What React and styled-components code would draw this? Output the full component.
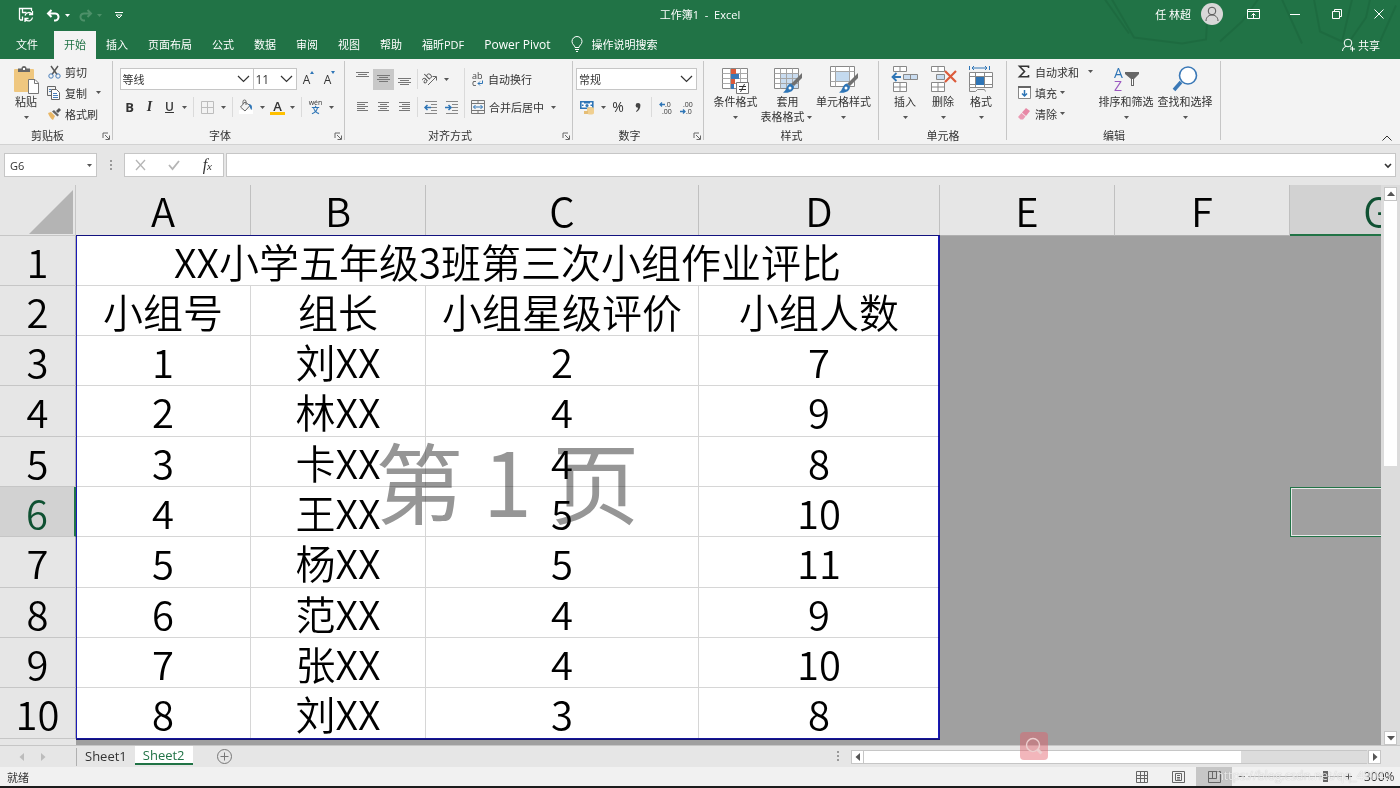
import React from 'react';
import styled, { createGlobalStyle, css } from 'styled-components';

const GlobalStyle = createGlobalStyle`
  :root {
    --green: #217346;
    --ribbon: #f3f3f3;
    --chrome: #e6e6e6;
    --line: #c6c6c6;
    --ink: #333333;
    --blue: #2e75b6;
  }

  * {
    box-sizing: border-box;
  }

  body {
    margin: 0;
    font-family: 'Open Sans', 'Noto Sans CJK SC', sans-serif;
    font-size: 11px;
    color: var(--ink);
  }

  button,
  input,
  select {
    font: inherit;
    color: inherit;
    margin: 0;
    padding: 0;
    border: 0;
    background: none;
    border-radius: 0;
  }

  svg {
    display: block;
    flex: none;
    overflow: visible;
  }
`;

const GROUPS = [
  ['1', '刘XX', '2', '7'],
  ['2', '林XX', '4', '9'],
  ['3', '卡XX', '4', '8'],
  ['4', '王XX', '5', '10'],
  ['5', '杨XX', '5', '11'],
  ['6', '范XX', '4', '9'],
  ['7', '张XX', '4', '10'],
  ['8', '刘XX', '3', '8'],
];

const COLUMNS = ['A', 'B', 'C', 'D', 'E', 'F', 'G'];
const COLUMN_WIDTHS = [76, 175, 175, 273, 241, 175, 175, 175];
const TABS = ['插入', '页面布局', '公式', '数据', '审阅', '视图', '帮助', '福昕PDF'];

/* ---------- icons ---------- */

const Icon = ({ w = 16, h = 16, children, ...rest }) => (
  <svg
    width={w}
    height={h}
    viewBox={`0 0 ${w} ${h}`}
    fill="none"
    stroke="currentColor"
    aria-hidden="true"
    {...rest}
  >
    {children}
  </svg>
);

const Caret = () => (
  <CaretBox>
    <Icon w={5} h={3} stroke="none">
      <path d="M0 0h5L2.500 3z" fill="currentColor" />
    </Icon>
  </CaretBox>
);

const Chevron = () => (
  <Icon w={13} h={8} strokeWidth="1.2">
    <path d="M1 1l5.500 5.500L12 1" />
  </Icon>
);

const Launcher = () => (
  <Icon w={8} h={8} stroke="#666">
    <path d="M1 6V1h5M3 3l4 4M7.500 3.500v4h-4" />
  </Icon>
);

const SaveIcon = () => (
  <Icon w={16} h={16} strokeWidth="1.3">
    <path d="M5 13H2.500L1.500 12V1.500h12V4M4.500 1.500v4h4M4.500 13V9.500" />
    <path d="M7 8.500a4 4 0 0 1 7-1.500M14.500 4v3.500H11M14.500 10.500a4 4 0 0 1-7 2M7 15v-3.500h3.500" />
  </Icon>
);

const UndoIcon = () => (
  <Icon w={15} h={13} strokeWidth="2">
    <path d="M5.500 1L2 4.500 5.500 8M2 4.500h6.500a3.500 3.500 0 0 1 1 7H8" />
  </Icon>
);

const RedoIcon = () => (
  <Icon w={15} h={13} strokeWidth="2">
    <path d="M9.500 1L13 4.500 9.500 8M13 4.500H6.500a3.500 3.500 0 0 0-1 7H7" />
  </Icon>
);

const CustomizeIcon = () => (
  <Icon w={8} h={7}>
    <path d="M0 .5h8M1 3h6L4 6z" />
  </Icon>
);

const AvatarIcon = () => (
  <Icon w={22} h={22}>
    <circle cx="11" cy="11" r="11" fill="#d8d8d8" stroke="none" />
    <circle cx="11" cy="8" r="3.800" stroke="#555" />
    <path d="M5 18c0-8 12-8 12 0" stroke="#555" />
  </Icon>
);

const RibbonModeIcon = () => (
  <Icon w={13} h={11}>
    <path d="M.5.5h12v9H.5zM.5 2.500h12M6.500 9V4.500M4.500 6.500l2-2 2 2" />
  </Icon>
);

const MinimizeIcon = () => (
  <Icon w={10} h={10}>
    <path d="M0 5.500h10" />
  </Icon>
);

const RestoreIcon = () => (
  <Icon w={10} h={10}>
    <path d="M.5 2.500h7v7h-7zM2.500 2.500v-2h7v7h-2" />
  </Icon>
);

const CloseIcon = () => (
  <Icon w={10} h={10}>
    <path d="M.5.5l9 9M9.500.5l-9 9" />
  </Icon>
);

const BulbIcon = () => (
  <Icon w={12} h={16}>
    <path d="M4 11.500c0-2-3-3-3-6a5 5 0 0 1 10 0c0 3-3 4-3 6zM4 13.500h4M5 15.500h2" />
  </Icon>
);

const ShareIcon = () => (
  <Icon w={14} h={14}>
    <circle cx="6" cy="5" r="3.800" />
    <path d="M.5 13c.3-3 2-4.500 4-4.500M8 8.500l1.500 1M10.500 8.500v5M8 11h5" />
  </Icon>
);

const PasteIcon = () => (
  <Icon w={28} h={28} stroke="none">
    <rect x="2" y="3" width="20" height="23" rx="1" fill="#efc77f" />
    <path d="M6 6V2.500h3.500a2.500 2.500 0 0 1 5 0H18V6z" fill="#666" />
    <rect x="11" y="2" width="2" height="2" fill="#fff" />
    <path d="M16.500 13.500h6.500l3.500 3.500v10.500h-10z" fill="#fff" stroke="#777" />
    <path d="M22.500 13.500V17.500h4" stroke="#777" />
  </Icon>
);

const CutIcon = () => (
  <Icon w={13} h={14}>
    <path d="M3 1l6 8.500M10 1L4 9.500" stroke="#555" strokeWidth="1.400" />
    <circle cx="3" cy="11" r="2.200" stroke="#4a7fbb" />
    <circle cx="10" cy="11" r="2.200" stroke="#4a7fbb" />
  </Icon>
);

const CopyIcon = () => (
  <Icon w={14} h={14} stroke="#666">
    <path d="M8.500 3.500V.5h-8v9h4" />
    <path d="M4.500 3.500h5l3 3v7h-8z" fill="#fff" />
    <path d="M2 3.500h2M2 5.500h2M6 7.500h4M6 9.500h5M6 11.500h5" stroke="#4a7fbb" />
  </Icon>
);

const BrushIcon = () => (
  <Icon w={13} h={12} stroke="none">
    <path d="M0 5l3-1 4 4-2 4C3 11 1 8 0 5z" fill="#e9b766" />
    <path d="M4 3.500L6 2l5 5-1.500 1.500z" fill="#666" />
    <path d="M8 3l3-3 2 2-3 3z" fill="#555" />
  </Icon>
);

const BordersIcon = () => (
  <Icon w={13} h={13} stroke="#bdbdbd">
    <path d="M.5.5h12v12H.5zM6.500.5v12M.5 6.500h12" />
  </Icon>
);

const FillIcon = () => (
  <Icon w={15} h={14}>
    <rect x="0" y="10" width="14" height="4" fill="#fff" stroke="none" />
    <path d="M6 2L1.500 7l4.500 4 5-5.500zM4 4V1.500a1.500 1.500 0 0 1 3 0V5" stroke="#666" />
    <path d="M10 4c3 .5 3.500 3 2.500 6-1-1-2-3-2.500-6z" fill="#2e75b6" stroke="none" />
  </Icon>
);

const FontStepMark = ({ down }) => (
  <Icon w={5} h={3} stroke="none">
    <path d={down ? 'M0 0h4L2 3z' : 'M0 3h4L2 0z'} fill="#2e75b6" />
  </Icon>
);

const AlignIcon = ({ lines, top = 0 }) => (
  <Icon w={13} h={16} stroke="#777">
    {lines.map(([x, length], i) => (
      <path key={i} d={`M${x} ${top + i * 2 + 0.5}h${length}`} />
    ))}
  </Icon>
);

const OrientationIcon = () => (
  <Icon w={14} h={14}>
    <path d="M4 13l8-8M12.500 8.500V4.500h-4" stroke="#666" />
    <text
      x="-1"
      y="8"
      transform="rotate(-45 5 8)"
      fontSize="10"
      fill="#444"
      stroke="none"
    >
      ab
    </text>
  </Icon>
);

const IndentIcon = ({ right }) => (
  <Icon w={14} h={13} stroke="#888">
    <path d="M1 .5h12M7 3.500h6M7 6.500h6M7 9.500h6M1 12.500h12" />
    {right ? (
      <path d="M0 6.500h6M3.500 4l2.500 2.500L3.500 9" stroke="#2e75b6" strokeWidth="1.500" />
    ) : (
      <path d="M7 6.500H1M3.500 4L1 6.500 3.500 9" stroke="#2e75b6" strokeWidth="1.500" />
    )}
  </Icon>
);

const WrapIcon = () => (
  <Icon w={13} h={14} stroke="none">
    <text x="1" y="7" fontSize="9" fill="#444">
      ab
    </text>
    <text x="1" y="14" fontSize="9" fill="#444">
      c
    </text>
    <path d="M11.500 8.500v3H7M9 9.500l-2 2 2 2" stroke="#2e75b6" />
  </Icon>
);

const MergeIcon = () => (
  <Icon w={14} h={14} stroke="#777">
    <path d="M.5.5h13v13H.5zM.5 3.500h13M.5 10.500h13M7 .5v3M7 10.500v3" />
    <path d="M2.500 7h9M4.500 5l-2 2 2 2M9.500 5l2 2-2 2" stroke="#2e75b6" />
  </Icon>
);

const CurrencyIcon = () => (
  <Icon w={15} h={15} stroke="none">
    <path d="M.8 1.800h12v6.500H.8z" fill="#fff" stroke="#2e75b6" strokeWidth="1.600" />
    <path d="M4 2h6v1.500H4zM2 4.500h1.500v1.500H2zM10.500 4.500H12v1.500h-1.500z" fill="#2e75b6" />
    <circle cx="7" cy="5.500" r="1.600" fill="#2e75b6" />
    <ellipse cx="10.500" cy="8.500" rx="3.500" ry="1.500" fill="#f0cf90" />
    <path d="M7 9h7v4c0 2-7 2-7 0z" fill="#f0cf90" />
    <path d="M4 11h4v3H4z" fill="#e5bd75" />
  </Icon>
);

const DecimalIcon = ({ decrease }) => (
  <Icon w={13} h={13} stroke="none">
    <text x={decrease ? 3 : 6} y="6" fontSize="7" fill="#333">
      {decrease ? '.00' : '.0'}
    </text>
    <text x={decrease ? 6 : 3} y="13" fontSize="7" fill="#333">
      {decrease ? '.0' : '.00'}
    </text>
    {decrease ? (
      <path d="M0 10.500h5M3 8.500l2 2-2 2" stroke="#2e75b6" strokeWidth="1.300" />
    ) : (
      <path d="M6 3.500H1M3 1.500l-2 2 2 2" stroke="#2e75b6" strokeWidth="1.300" />
    )}
  </Icon>
);

const ConditionalIcon = () => (
  <Icon w={28} h={28}>
    <path d="M.5 2.500h25v20H.5z" fill="#fff" stroke="#888" />
    <path d="M8.500 2.500v20M18.500 2.500v20M.5 7.500h25M.5 12.500h25M.5 17.500h25" stroke="#aaa" />
    <path d="M9 3h5v5H9zM9 13h4v5H9z" fill="#dc5b3b" stroke="none" />
    <path d="M9 8h8v5H9zM9 18h3v5H9z" fill="#3b79b7" stroke="none" />
    <path d="M14.500 16.500h12v11h-12z" fill="#fff" stroke="#777" />
    <path d="M17 20.500h7M17 23.500h7M22.500 18l-4 8" stroke="#333" />
  </Icon>
);

const PaintBrush = () => (
  <>
    <path d="M28 7v5l-8 8-3-2z" fill="#707070" stroke="none" />
    <path d="M17 17.500l3 3c0 5-5 7-11 6 4-2 3-8 8-9z" fill="#2e75b6" stroke="none" />
    <circle cx="16" cy="22" r="1.500" fill="#fff" stroke="none" />
  </>
);

const TableFormatIcon = () => (
  <Icon w={28} h={28}>
    <path d="M.5 2.500h24v20H.5z" fill="#fff" stroke="#888" />
    <path d="M7 8h17v14H7z" fill="#c9dcf0" stroke="none" />
    <path d="M6.500 2.500v20M12.500 2.500v20M18.500 2.500v20M.5 7.500h24M.5 12.500h24M.5 17.500h24" stroke="#a5a5a5" />
    <PaintBrush />
  </Icon>
);

const CellStyleIcon = () => (
  <Icon w={28} h={28}>
    <path d="M.5.5h24v20H.5z" fill="#fff" stroke="#888" />
    <path d="M5.500.5v20M19.500.5v20M.5 5.500h24M.5 15.500h24" stroke="#a5a5a5" />
    <path d="M6 6h13v9H6z" fill="#c4daef" stroke="none" />
    <PaintBrush />
  </Icon>
);

const InsertCellsIcon = () => (
  <Icon w={28} h={28} stroke="#888">
    <path d="M2.500.5h13v5h-13zM9 .5v5M2.500 16.500h13v9h-13zM9 16.500v9M2.500 21h13" fill="#fff" />
    <path d="M12.500 8.500h14v5h-14zM19.500 8.500v5" fill="#c9dcf0" />
    <path d="M10 11H1.500M5.500 7l-4 4 4 4" stroke="#2e75b6" strokeWidth="1.800" />
  </Icon>
);

const DeleteCellsIcon = () => (
  <Icon w={28} h={28} stroke="#888">
    <path d="M2.500.5h13v5h-13zM9 .5v5M2.500 16.500h13v9h-13zM9 16.500v9M2.500 21h13" fill="#fff" />
    <path d="M7.500 8.500h8v5h-8z" fill="#c9dcf0" />
    <path d="M16 5l11 11M27 5L16 16" stroke="#dc5b3b" strokeWidth="2.200" />
  </Icon>
);

const FormatCellsIcon = () => (
  <Icon w={28} h={28} stroke="#888">
    <path d="M2.500 6.500h23v15h-23z" fill="#fff" />
    <path d="M8.500 6.500v15M17.500 6.500v15M2.500 10.500h23M2.500 18.500h23M2.500 21.500v4h6l2-2h7l1 2" />
    <path d="M9 11h8v8H9z" fill="#2e75b6" stroke="none" />
    <path d="M2.500 0v4M22.500 0v4M5 2h15M7 0L5 2l2 2M18 0l2 2-2 2" stroke="#2e75b6" />
  </Icon>
);

const SumIcon = () => (
  <Icon w={12} h={13} strokeWidth="1.600">
    <path d="M10.500 3V1.200H1.500L6.500 6.500l-5 5.200h9V10" />
  </Icon>
);

const FillDownIcon = () => (
  <Icon w={13} h={13}>
    <path d="M.5 1.500h12v11H.5z" fill="#fff" stroke="#888" />
    <path d="M0 1h13" stroke="#666" strokeWidth="2" />
    <path d="M6.500 4v6M4 7.500L6.500 10 9 7.500" stroke="#2e75b6" strokeWidth="1.500" />
  </Icon>
);

const EraserIcon = () => (
  <Icon w={13} h={12} stroke="none">
    <path d="M8 0l4 3-4 5-4-3.500z" fill="#e788a6" />
    <path d="M3.500 5l4 3.500L5 11.500H2.500L0 9z" fill="#eb9ab3" />
  </Icon>
);

const SortFilterIcon = () => (
  <Icon w={28} h={28} stroke="none">
    <text x="2" y="12" fontSize="14" fill="#2e75b6">
      A
    </text>
    <text x="2" y="25" fontSize="14" fill="#9b59c0">
      Z
    </text>
    <path d="M13 6h14v2l-5 5v7h-3v-7l-6-5z" fill="#666" />
    <path d="M20.500 13v6" stroke="#fff" />
  </Icon>
);

const FindIcon = () => (
  <Icon w={28} h={28}>
    <path d="M10 16l-7 8" stroke="#3b79b7" strokeWidth="3.500" />
    <circle cx="17" cy="9.500" r="8.500" fill="#fff" stroke="#3b79b7" strokeWidth="1.600" />
  </Icon>
);

const Arrow = ({ dir }) => {
  const turn = { up: 180, down: 0, left: 90, right: -90 }[dir];
  return (
    <Icon w={8} h={8} stroke="none">
      <path d="M0 2h8L4 6.500z" fill="currentColor" transform={`rotate(${turn} 4 4)`} />
    </Icon>
  );
};

const BookIcon = ({ kind }) => (
  <Icon w={13} h={12} stroke="#666">
    {kind === 'normal' && <path d="M.5.5h11v11H.5zM4.500.5v11M8.500.5v11M.5 4.500h11M.5 7.500h11" />}
    {kind === 'layout' && <path d="M.5.5h12v11H.5zM3.500 2.500h6v7h-6zM5 4.500h3M5 6.500h3M5 8h3" />}
    {kind === 'break' && <path d="M.5.5h12v11H.5zM4.500.5v7M8.500.5v7M.5 7.500h8" />}
  </Icon>
);

/* ---------- page ---------- */

const BigTool = ({ icon, label, second, $w }) => (
  <BigButton type="button" $w={$w}>
    {icon}
    <span>{label}</span>
    <BigFoot>
      {second}
      <Caret />
    </BigFoot>
  </BigButton>
);

const SmallTool = ({ icon, label, caret, $push }) => (
  <SmallButton type="button" $push={$push}>
    <SmallIcon>{icon}</SmallIcon>
    <span>{label}</span>
    {caret && <Caret />}
  </SmallButton>
);

const RibbonGroup = ({ label, width, pad = 0, launcher, children }) => (
  <Group $w={width}>
    <Tools $pad={pad}>{children}</Tools>
    <GroupLabel $launcher={launcher}>
      {label}
      {launcher && (
        <LauncherButton type="button" aria-label={`${label}设置`}>
          <Launcher />
        </LauncherButton>
      )}
    </GroupLabel>
  </Group>
);

const Dropdown = ({ label, value, $w }) => (
  <SelectBox $w={$w}>
    <select aria-label={label} defaultValue={value}>
      <option>{value}</option>
    </select>
    <Chevron />
  </SelectBox>
);

const FULL = [[0, 13], [2, 9], [0, 13]];

const Ribbon = () => (
  <RibbonBar>
    <RibbonGroup label="剪贴板" width={113} pad={9} launcher>
      <BigTool $w={34} icon={<PasteIcon />} label="粘贴" />
      <Stack>
        <SmallTool icon={<CutIcon />} label="剪切" />
        <SmallTool icon={<CopyIcon />} label="复制" caret $push />
        <SmallTool icon={<BrushIcon />} label="格式刷" />
      </Stack>
    </RibbonGroup>

    <RibbonGroup label="字体" width={232} pad={7} launcher>
      <Rows $grow>
        <Row>
          <Dropdown label="字体" value="等线" $w={134} />
          <Dropdown label="字号" value="11" $w={43} />
          <Tool type="button" $w={22}>
            <FontStep>A<FontStepMark /></FontStep>
          </Tool>
          <Tool type="button">
            <FontStep>A<FontStepMark down /></FontStep>
          </Tool>
        </Row>
        <Row>
          <Tool type="button"><b>B</b></Tool>
          <Tool type="button"><Italic>I</Italic></Tool>
          <Tool type="button"><Underline>U</Underline></Tool>
          <Caret />
          <Rule />
          <Tool type="button" $w={22} aria-label="边框"><BordersIcon /></Tool>
          <Caret />
          <Rule />
          <Tool type="button" $w={22} aria-label="填充颜色"><FillIcon /></Tool>
          <Caret />
          <Tool type="button"><FontColor>A</FontColor></Tool>
          <Caret />
          <Rule />
          <Tool type="button" $w={22}>
            <Phonetic>
              <span>wén</span>
              <b>文</b>
            </Phonetic>
          </Tool>
          <Caret />
        </Row>
      </Rows>
    </RibbonGroup>

    <RibbonGroup label="对齐方式" width={228} pad={7} launcher>
      <Rows>
        <Row>
          <Tool type="button" $w={21} aria-label="顶端对齐"><AlignIcon lines={FULL} top={1} /></Tool>
          <Tool type="button" $w={21} $active aria-label="垂直居中">
            <AlignIcon lines={[[0, 13], [2, 9], [0, 13], [2, 9]]} top={4} />
          </Tool>
          <Tool type="button" $w={21} aria-label="底端对齐">
            <AlignIcon lines={[[0, 13], [2, 9], [0, 13], [2, 9]]} top={7} />
          </Tool>
          <Rule $tight />
          <Tool type="button" $w={21} aria-label="方向"><OrientationIcon /></Tool>
          <Caret />
        </Row>
        <Row>
          <Tool type="button" $w={21} aria-label="左对齐">
            <AlignIcon lines={[[1, 11], [1, 8], [1, 11], [1, 8], [1, 11]]} top={3} />
          </Tool>
          <Tool type="button" $w={21} aria-label="居中">
            <AlignIcon lines={[[1, 11], [3, 7], [1, 11], [3, 7], [1, 11]]} top={3} />
          </Tool>
          <Tool type="button" $w={21} aria-label="右对齐">
            <AlignIcon lines={[[1, 11], [4, 8], [1, 11], [4, 8], [1, 11]]} top={3} />
          </Tool>
          <Rule $tight />
          <Tool type="button" $w={21} aria-label="减少缩进量"><IndentIcon /></Tool>
          <Tool type="button" $w={21} aria-label="增加缩进量"><IndentIcon right /></Tool>
        </Row>
      </Rows>
      <Rule $tight $tall />
      <Rows $grow>
        <TextTool type="button">
          <WrapIcon />
          自动换行
        </TextTool>
        <TextTool type="button">
          <MergeIcon />
          合并后居中
          <Caret />
        </TextTool>
      </Rows>
    </RibbonGroup>

    <RibbonGroup label="数字" width={131} pad={3} launcher>
      <Rows $grow>
        <Row>
          <Dropdown label="数字格式" value="常规" $w={121} />
        </Row>
        <Row>
          <Tool type="button" $w={22} aria-label="会计数字格式"><CurrencyIcon /></Tool>
          <Caret />
          <Tool type="button"><Percent>%</Percent></Tool>
          <Tool type="button" aria-label="千位分隔样式">
            <Icon w={6} h={9} stroke="none">
              <path d="M3 0a2.400 2.400 0 0 1 2.400 2.600C5.400 5.500 4 7.500 1.500 9L1 8.300C2.500 7 3 6 3 4.800A2.400 2.400 0 0 1 3 0z" fill="#444" />
            </Icon>
          </Tool>
          <Rule />
          <Tool type="button" $w={21}><DecimalIcon /></Tool>
          <Tool type="button" $w={21}><DecimalIcon decrease /></Tool>
        </Row>
      </Rows>
    </RibbonGroup>

    <RibbonGroup label="样式" width={175}>
      <BigTool $w={50} icon={<ConditionalIcon />} label="条件格式" />
      <BigTool $w={54} icon={<TableFormatIcon />} label="套用" second="表格格式" />
      <BigTool $w={58} icon={<CellStyleIcon />} label="单元格样式" />
    </RibbonGroup>

    <RibbonGroup label="单元格" width={128}>
      <BigTool $w={38} icon={<InsertCellsIcon />} label="插入" />
      <BigTool $w={38} icon={<DeleteCellsIcon />} label="删除" />
      <BigTool $w={38} icon={<FormatCellsIcon />} label="格式" />
    </RibbonGroup>

    <RibbonGroup label="编辑" width={214} pad={6}>
      <Stack>
        <SmallTool icon={<SumIcon />} label="自动求和" caret $push />
        <SmallTool icon={<FillDownIcon />} label="填充" caret />
        <SmallTool icon={<EraserIcon />} label="清除" caret />
      </Stack>
      <BigTool $w={58} icon={<SortFilterIcon />} label="排序和筛选" />
      <BigTool $w={60} icon={<FindIcon />} label="查找和选择" />
    </RibbonGroup>

    <CollapseButton type="button" aria-label="折叠功能区">
      <Icon w={10} h={6}>
        <path d="M.5 5.500L5 1l4.500 4.500" />
      </Icon>
    </CollapseButton>
  </RibbonBar>
);

const Header = () => (
  <TitleArea>
    <TitlePattern viewBox="0 0 300 60" preserveAspectRatio="xMaxYMid slice" aria-hidden="true">
      <path d="M5 0l24 34M12 0l22 38 48 6 24-4 2-34M120 42l22-20 16-22M182 0l20 44M214 0l6 32 22 10 10-42M248 44l18-26 4-18M296 6l-16 36" />
    </TitlePattern>
    <TitleBar>
      <QuickAccess>
        <button type="button" aria-label="保存"><SaveIcon /></button>
        <button type="button" aria-label="撤消"><UndoIcon /><Caret /></button>
        <button type="button" aria-label="恢复" disabled><RedoIcon /><Caret /></button>
        <button type="button" aria-label="自定义快速访问工具栏"><CustomizeIcon /></button>
      </QuickAccess>
      <span>工作簿1&nbsp; - &nbsp;Excel</span>
      <WindowTools>
        <Account>
          任 林超
          <AvatarIcon />
        </Account>
        <button type="button" aria-label="功能区显示选项"><RibbonModeIcon /></button>
        <button type="button" aria-label="最小化"><MinimizeIcon /></button>
        <button type="button" aria-label="还原"><RestoreIcon /></button>
        <button type="button" aria-label="关闭"><CloseIcon /></button>
      </WindowTools>
    </TitleBar>
    <TabBar>
      <FileTab type="button">文件</FileTab>
      <Tab type="button" $active>开始</Tab>
      {TABS.map((tab) => (
        <Tab type="button" key={tab}>{tab}</Tab>
      ))}
      <Tab type="button" $latin>Power Pivot</Tab>
      <TellMe type="button">
        <BulbIcon />
        操作说明搜索
      </TellMe>
      <ShareButton type="button">
        <ShareIcon />
        共享
      </ShareButton>
    </TabBar>
  </TitleArea>
);

const FormulaBar = () => (
  <FormulaRow>
    <NameBox>
      <input aria-label="名称框" defaultValue="G6" />
      <Caret />
    </NameBox>
    <Dots />
    <FormulaTools>
      <button type="button" aria-label="取消">
        <Icon w={11} h={10} stroke="#b5b5b5" strokeWidth="1.300"><path d="M1 0l9 10M10 0L1 10" /></Icon>
      </button>
      <button type="button" aria-label="输入">
        <Icon w={12} h={10} stroke="#b5b5b5" strokeWidth="1.800"><path d="M1 5l3.500 4L11 1" /></Icon>
      </button>
      <FxButton type="button">f<small>x</small></FxButton>
    </FormulaTools>
    <FormulaInput>
      <input aria-label="编辑栏" />
      <Icon w={8} h={5} strokeWidth="1.600"><path d="M1 1l3 3 3-3" /></Icon>
    </FormulaInput>
  </FormulaRow>
);

const Outside = ({ row }) => (
  <>
    <GreyCell />
    <GreyCell />
    <GreyCell $selected={row === 6} />
  </>
);

const Sheet = () => (
  <SheetArea>
    <SheetView>
      <Grid>
        <colgroup>
          {COLUMN_WIDTHS.map((width, i) => (
            <Col key={i} $w={width} />
          ))}
        </colgroup>
        <thead>
          <tr>
            <Corner>
              <Icon w={44} h={44} stroke="none">
                <path d="M44 0v44H0z" fill="#b4b4b4" />
              </Icon>
            </Corner>
            {COLUMNS.map((name) => (
              <ColumnHead key={name} scope="col" $active={name === 'G'}>{name}</ColumnHead>
            ))}
          </tr>
        </thead>
        <tbody>
          <tr>
            <RowHead scope="row">1</RowHead>
            <Cell colSpan={4}>XX小学五年级3班第三次小组作业评比</Cell>
            <Outside row={1} />
          </tr>
          <tr>
            <RowHead scope="row">2</RowHead>
            <Cell>小组号</Cell>
            <Cell>组长</Cell>
            <Cell>小组星级评价</Cell>
            <Cell>小组人数</Cell>
            <Outside row={2} />
          </tr>
          {GROUPS.map((group, i) => (
            <tr key={group[0]}>
              <RowHead scope="row" $active={i + 3 === 6}>{i + 3}</RowHead>
              {group.map((value, j) => (
                <Cell key={j}>{value}</Cell>
              ))}
              <Outside row={i + 3} />
            </tr>
          ))}
        </tbody>
      </Grid>
      <PrintArea>第 1 页</PrintArea>
    </SheetView>
    <VerticalScroll>
      <ScrollButton type="button" aria-label="向上滚动"><Arrow dir="up" /></ScrollButton>
      <VerticalThumb />
      <ScrollButton type="button" aria-label="向下滚动"><Arrow dir="down" /></ScrollButton>
    </VerticalScroll>
  </SheetArea>
);

const Footer = () => (
  <>
    <SheetTabs>
      <SheetNav>
        <Arrow dir="left" />
        <Arrow dir="right" />
      </SheetNav>
      <SheetTab type="button">Sheet1</SheetTab>
      <SheetTab type="button" $active>Sheet2</SheetTab>
      <AddSheet type="button" aria-label="新工作表">
        <Icon w={15} h={15} stroke="#777">
          <circle cx="7.500" cy="7.500" r="7" />
          <path d="M7.500 3.500v8M3.500 7.500h8" />
        </Icon>
      </AddSheet>
      <Dots />
      <HorizontalScroll>
        <ScrollButton type="button" aria-label="向左滚动"><Arrow dir="left" /></ScrollButton>
        <HorizontalThumb />
        <ScrollButton type="button" aria-label="向右滚动"><Arrow dir="right" /></ScrollButton>
      </HorizontalScroll>
      <SearchBadge>
        <Icon w={18} h={18} stroke="#ecd0d0" strokeWidth="1.400">
          <circle cx="8" cy="8" r="6.500" />
          <path d="M12.500 12.500l4 4" strokeWidth="3" />
        </Icon>
      </SearchBadge>
    </SheetTabs>
    <StatusBar>
      <span>就绪</span>
      <StatusTools>
        <ViewButton type="button" aria-label="普通"><BookIcon kind="normal" /></ViewButton>
        <ViewButton type="button" aria-label="页面布局"><BookIcon kind="layout" /></ViewButton>
        <ViewButton type="button" aria-label="分页预览" $active><BookIcon kind="break" /></ViewButton>
        <ZoomSlider>
          <Icon w={7} h={7} stroke="#666"><path d="M0 3.500h7" /></Icon>
          <input type="range" aria-label="显示比例" min="10" max="400" defaultValue="340" />
          <Icon w={7} h={7} stroke="#555"><path d="M0 3.500h7M3.500 0v7" /></Icon>
        </ZoomSlider>
        <ZoomValue>300%</ZoomValue>
        <SourceLink>https://blog.csdn.net/qq_49043</SourceLink>
      </StatusTools>
    </StatusBar>
  </>
);

export default function App() {
  return (
    <Window>
      <GlobalStyle />
      <Header />
      <Ribbon />
      <FormulaBar />
      <Sheet />
      <Footer />
    </Window>
  );
}

/* ---------- styles ---------- */

const Window = styled.div`
  display: flex;
  flex-direction: column;
  height: 100vh;
  overflow: hidden;
  background: var(--chrome);
  border-bottom: 2px solid #1c1c1c;
`;

const TitleArea = styled.header`
  position: relative;
  flex: none;
  background: var(--green);
  color: #fff;
`;

const TitlePattern = styled.svg`
  position: absolute;
  top: 0;
  right: 0;
  width: 300px;
  height: 100%;
  overflow: hidden;
  fill: none;
  stroke: #1c663d;
  stroke-width: 2;
  opacity: 0.6;
`;

const TitleBar = styled.div`
  position: relative;
  display: grid;
  grid-template-columns: 1fr auto 1fr;
  align-items: center;
  height: 28px;
`;

const CaretBox = styled.span`
  display: inline-flex;
  flex: none;
  justify-content: center;
  width: 10px;
  color: #555;
`;

const QuickAccess = styled.div`
  display: flex;
  align-items: center;
  gap: 12px;
  padding: 2px 0 0 18px;

  button {
    display: flex;
    align-items: center;
    color: #fff;
  }

  button:disabled {
    color: #4d9069;
  }

  ${CaretBox} {
    width: 8px;
    margin-left: 2px;
    color: inherit;
  }

  button:disabled {
    margin-left: -5px;
  }
`;

const WindowTools = styled.div`
  display: flex;
  align-items: center;
  justify-content: flex-end;

  button {
    display: grid;
    place-items: center;
    width: 42px;
    height: 28px;
  }
`;

const Account = styled.span`
  display: flex;
  align-items: center;
  gap: 10px;
  margin-right: 9px;
`;

const TabBar = styled.nav`
  position: relative;
  display: flex;
  align-items: flex-end;
  height: 31px;
  padding-left: 6px;
`;

const Tab = styled.button`
  height: 28px;
  padding: 0 10px 2px;
  white-space: nowrap;
  font-size: ${(props) => (props.$latin ? '12px' : '11px')};
  ${(props) =>
    props.$active &&
    css`
      background: var(--ribbon);
      color: var(--green);
    `}
`;

const FileTab = styled(Tab)`
  margin-right: 6px;
`;

const TellMe = styled(Tab)`
  display: flex;
  align-items: center;
  gap: 9px;
`;

const ShareButton = styled(TellMe)`
  gap: 2px;
  margin-left: auto;
  padding: 0 20px;
`;

const RibbonBar = styled.section`
  display: flex;
  flex: none;
  padding-top: 2px;
  background: var(--ribbon);
  border-bottom: 1px solid #d2d2d2;
  white-space: nowrap;
`;

const Group = styled.div`
  position: relative;
  display: flex;
  flex-direction: column;
  width: ${(props) => props.$w}px;

  &::after {
    content: '';
    position: absolute;
    top: 0;
    right: 0;
    bottom: 4px;
    border-right: 1px solid var(--line);
  }
`;

const Tools = styled.div`
  display: flex;
  justify-content: center;
  height: 64px;
  padding: 0 ${(props) => props.$pad}px;
`;

const GroupLabel = styled.div`
  display: flex;
  align-items: center;
  justify-content: center;
  height: 19px;
  padding-right: ${(props) => (props.$launcher ? '18px' : '0')};
`;

const LauncherButton = styled.button`
  position: absolute;
  right: 3px;
  bottom: 4px;
`;

const BigButton = styled.button`
  display: flex;
  flex-direction: column;
  flex: none;
  align-items: center;
  gap: 1px;
  width: ${(props) => props.$w}px;
  padding-top: 5px;
  line-height: 14px;
`;

const BigFoot = styled.span`
  display: flex;
  align-items: center;
  justify-content: center;
  height: 14px;
`;

const Stack = styled.div`
  display: flex;
  flex-direction: column;
  flex: 1;
`;

const SmallButton = styled.button`
  display: flex;
  align-items: center;
  height: 21px;

  ${CaretBox} {
    margin-left: ${(props) => (props.$push ? '6px' : '0')};
  }
`;

const SmallIcon = styled.span`
  display: grid;
  place-items: center;
  width: 22px;
`;

const Rows = styled.div`
  display: flex;
  flex-direction: column;
  flex: ${(props) => (props.$grow ? '1' : 'none')};
  gap: 6px;
  padding-top: 7px;
`;

const Row = styled.div`
  display: flex;
  align-items: center;
  height: 22px;
`;

const Tool = styled.button`
  display: grid;
  place-items: center;
  width: ${(props) => props.$w || 20}px;
  height: 21px;
  font-size: 13px;
  line-height: 18px;
  background: ${(props) => (props.$active ? '#c8c8c8' : 'none')};
`;

const TextTool = styled.button`
  display: flex;
  align-items: center;
  gap: 4px;
  height: 22px;
  padding-left: 4px;
`;

const Rule = styled.span`
  flex: none;
  width: 1px;
  height: ${(props) => (props.$tall ? '50px' : '20px')};
  margin: ${(props) => (props.$tall ? '7px' : '0')} ${(props) => (props.$tight ? '2px' : '3px')} 0;
  background: #dadada;
`;

const SelectBox = styled.span`
  display: grid;
  grid-template-columns: 1fr 13px 3px;
  align-items: center;
  width: ${(props) => props.$w}px;
  height: 22px;
  background: #fff;
  border: 1px solid var(--line);

  select {
    grid-area: 1 / 1 / 2 / 4;
    width: 100%;
    padding-left: 2px;
    appearance: none;
  }

  svg {
    grid-area: 1 / 2;
    pointer-events: none;
  }

  & + & {
    border-left: 0;
    font-size: 12px;
  }
`;

const FontStep = styled.span`
  display: flex;
  padding: 1px 0 0 3px;
  font-size: 12px;
  line-height: 18px;
`;

const Italic = styled.i`
  font-family: 'Liberation Serif', serif;
  font-size: 14px;
  font-weight: 700;
`;

const Underline = styled.span`
  font-size: 12px;
  font-weight: 600;
  text-decoration: underline;
`;

const FontColor = styled.span`
  width: 15px;
  font-weight: 600;
  line-height: 12px;
  border-bottom: 3px solid #ffc000;
`;

const Phonetic = styled.span`
  display: flex;
  flex-direction: column;
  align-items: center;
  font-size: 7px;
  line-height: 6px;

  b {
    font-size: 8px;
    line-height: 8px;
    color: var(--blue);
  }
`;

const Percent = styled.span`
  font-size: 14px;
`;

const CollapseButton = styled.button`
  align-self: flex-end;
  margin: 0 8px 3px auto;
`;

const FormulaRow = styled.section`
  display: flex;
  flex: none;
  align-items: center;
  height: 40px;
  padding: 0 4px;

  input {
    flex: 1;
    min-width: 0;
    outline: 0;
  }
`;

const boxed = css`
  display: flex;
  align-items: center;
  height: 24px;
  background: #fff;
  border: 1px solid var(--line);
`;

const NameBox = styled.div`
  ${boxed}
  width: 93px;
  padding: 0 2px 0 5px;
`;

const Dots = styled.span`
  width: 3px;
  height: 11px;
  margin: 0 12px;
  background: repeating-linear-gradient(#999 0 2px, transparent 2px 4px) center / 2px 100% no-repeat;
`;

const FormulaTools = styled.div`
  ${boxed}
  width: 100px;
  justify-content: space-between;
  padding: 0 11px 0 10px;
`;

const FxButton = styled.button`
  font-family: 'Liberation Serif', serif;
  font-size: 16px;
  font-style: italic;
  line-height: 20px;

  small {
    font-size: 11px;
  }
`;

const FormulaInput = styled.div`
  ${boxed}
  flex: 1;
  margin-left: 2px;
  padding: 0 3px 0 6px;
`;

const SheetArea = styled.main`
  display: flex;
  flex: 1;
  min-height: 0;
`;

const SheetView = styled.div`
  position: relative;
  flex: 1;
  min-width: 0;
  overflow: hidden;
  background: linear-gradient(90deg, var(--chrome) 76px, #a0a0a0 76px);
`;

const Grid = styled.table`
  width: 1465px;
  table-layout: fixed;
  border-collapse: separate;
  border-spacing: 0;
  font-family: 'Noto Sans CJK SC', sans-serif;
  font-size: 40px;
  font-weight: 350;
  line-height: 48px;
  color: #000;

  th,
  td {
    padding: 0;
    font-weight: inherit;
    text-align: center;
    white-space: nowrap;
  }

  tbody tr {
    height: 50px;
  }

  tbody tr:nth-child(3n + 4) {
    height: 51px;
  }
`;

const Col = styled.col`
  width: ${(props) => props.$w}px;
`;

const headState = css`
  background: ${(props) => (props.$active ? '#d2d2d2' : 'var(--chrome)')};
  color: ${(props) => (props.$active ? '#0f5132' : '#000')};
`;

const Corner = styled.td`
  height: 51px;
  background: var(--chrome);
  border-right: 1px solid var(--line);
  border-bottom: 1px solid var(--line);

  svg {
    margin: 3px 0 0 29px;
  }
`;

const ColumnHead = styled.th`
  ${headState}
  height: 51px;
  border-right: 1px solid #c0c0c0;
  border-bottom: ${(props) => (props.$active ? '2px solid var(--green)' : '1px solid #b0b0b0')};
`;

const RowHead = styled.th`
  ${headState}
  border-right: ${(props) => (props.$active ? '2px solid var(--green)' : '1px solid #b0b0b0')};
  border-bottom: 1px solid var(--line);
`;

const Cell = styled.td`
  background: #fff;
  border-right: 1px solid #d6d6d6;
  border-bottom: 1px solid #d6d6d6;
`;

const GreyCell = styled.td`
  background: #a0a0a0;
  ${(props) =>
    props.$selected &&
    css`
      border: 1px solid var(--green);
      box-shadow: inset 0 0 0 1px #e8e8e8;
    `}
`;

/* page number shown behind the print area, framed by the page break lines */
const PrintArea = styled.div`
  position: absolute;
  top: 50px;
  left: 76px;
  display: flex;
  align-items: center;
  justify-content: center;
  width: 864px;
  height: 505px;
  padding-bottom: 18px;
  border: solid #1a1ab8;
  border-width: 1px 2px 2px 1px;
  font-family: 'Noto Sans CJK SC', sans-serif;
  font-size: 88px;
  font-weight: 400;
  color: #969696;
  mix-blend-mode: multiply;
  pointer-events: none;
`;

const VerticalScroll = styled.div`
  display: flex;
  flex-direction: column;
  align-items: center;
  width: 19px;
  padding-top: 2px;
  background: #dcdcdc;
`;

const ScrollButton = styled.button`
  display: grid;
  place-items: center;
  width: 13px;
  height: 14px;
  background: #fff;
  border: 1px solid var(--line);
  color: #555;
`;

const VerticalThumb = styled.div`
  flex: 1;
  width: 13px;
  background: linear-gradient(#fff 50%, #dcdcdc 50%);
`;

const SheetTabs = styled.section`
  position: relative;
  display: flex;
  flex: none;
  align-items: center;
  height: 22px;
  padding-right: 19px;
  border-top: 1px solid var(--line);
`;

const SheetNav = styled.div`
  display: flex;
  gap: 13px;
  width: 77px;
  height: 18px;
  padding-left: 18px;
  align-items: center;
  color: #bcbcbc;
  border-right: 1px solid #b0b0b0;
`;

const SheetTab = styled.button`
  align-self: flex-start;
  height: 19px;
  padding: 0 8px;
  font-size: 13px;
  line-height: 16px;
  ${(props) =>
    props.$active &&
    css`
      background: #fff;
      color: var(--green);
      border-bottom: 2px solid var(--green);
    `}
`;

const AddSheet = styled.button`
  margin: 0 auto 0 24px;
`;

const HorizontalScroll = styled.div`
  display: flex;
  flex: 0 0 530px;
  background: #dcdcdc;
`;

const HorizontalThumb = styled.div`
  flex: 1;
  margin-right: 1px;
  background: linear-gradient(90deg, #fff 75%, #dcdcdc 75%);
  border: solid var(--line);
  border-width: 1px 0;
`;

const SearchBadge = styled.span`
  position: absolute;
  top: -14px;
  right: 352px;
  display: grid;
  place-items: center;
  width: 28px;
  height: 28px;
  border-radius: 4px;
  background: rgba(226, 94, 104, 0.45);
`;

const StatusBar = styled.footer`
  display: flex;
  flex: none;
  align-items: center;
  justify-content: space-between;
  height: 19px;
  padding: 0 6px 0 7px;
  background: #f1f1f1;
`;

const StatusTools = styled.div`
  position: relative;
  display: flex;
  align-items: center;
`;

const ViewButton = styled.button`
  display: grid;
  place-items: center;
  width: 36px;
  height: 19px;
  background: ${(props) => (props.$active ? '#c6c6c6' : 'none')};
`;

const ZoomSlider = styled.div`
  display: flex;
  align-items: center;
  gap: 3px;
  width: 114px;
  margin: 0 12px 0 6px;

  input {
    flex: 1;
    min-width: 0;
    height: 12px;
    appearance: none;
    background: linear-gradient(#b4b4b4, #b4b4b4) center / 100% 1px no-repeat;
  }

  input::-webkit-slider-thumb {
    appearance: none;
    width: 5px;
    height: 11px;
    background: #666;
  }
`;

const ZoomValue = styled.span`
  width: 30px;
  font-size: 12px;
`;

const SourceLink = styled.span`
  position: absolute;
  right: 3px;
  bottom: 1px;
  font-size: 12px;
  line-height: 18px;
  white-space: nowrap;
  color: rgba(255, 255, 255, 0.8);
  text-shadow: 0 0 1px rgba(0, 0, 0, 0.3);
  pointer-events: none;
`;
